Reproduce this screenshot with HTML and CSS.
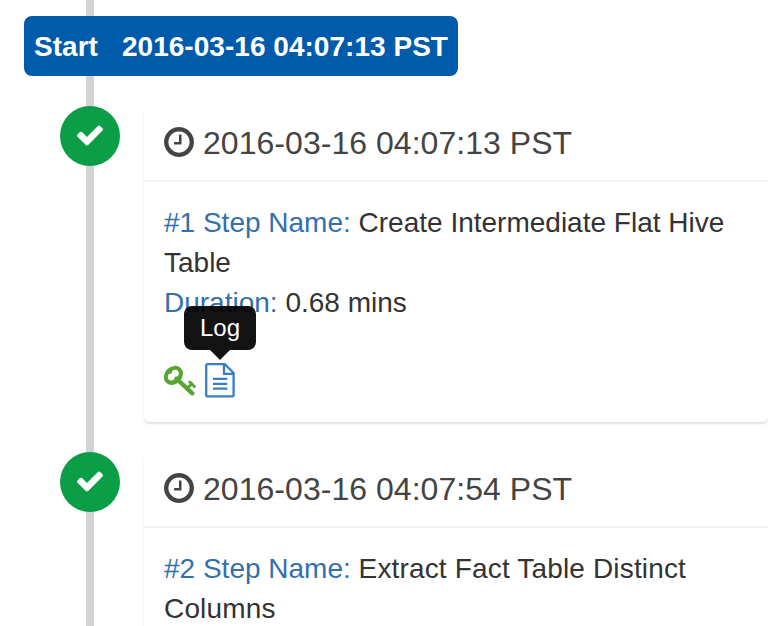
FILE: index.html
```html
<!DOCTYPE html>
<html lang="en">
<head>
<meta charset="utf-8">
<title>Job steps</title>
<link rel="stylesheet" href="styles.css">
</head>
<body>
<svg class="defs" width="0" height="0" aria-hidden="true">
  <symbol id="check" viewBox="0 0 1792 1792"><path d="M1671 566q0 40-28 68l-724 724-136 136q-28 28-68 28t-68-28l-136-136-362-362q-28-28-28-68t28-68l136-136q28-28 68-28t68 28l294 295 656-657q28-28 68-28t68 28l136 136q28 28 28 68z"/></symbol>
  <symbol id="clock" viewBox="128 128 1536 1536"><path d="M1024 544v448q0 14-9 23t-23 9h-320q-14 0-23-9t-9-23v-64q0-14 9-23t23-9h224v-352q0-14 9-23t23-9h64q14 0 23 9t9 23zm416 352q0-148-73-273t-198-198-273-73-273 73-198 198-73 273 73 273 198 198 273 73 273-73 198-198 73-273zm224 0q0 209-103 385.5t-279.5 279.5-385.5 103-385.5-103-279.5-279.5-103-385.5 103-385.5 279.5-279.5 385.5-103 385.5 103 279.5 279.5 103 385.5z"/></symbol>
</svg>
<ul class="timeline">
  <li class="time-label">
    <span class="label"><b>Start</b><b>2016-03-16 04:07:13 PST</b></span>
  </li>
  <li class="step">
    <span class="status"><svg class="check"><use href="#check"/></svg></span>
    <div class="card">
      <h3 class="card-header"><svg class="clock"><use href="#clock"/></svg><span>2016-03-16 04:07:13 PST</span></h3>
      <div class="card-body">
        <div class="name"><span class="key">#1 Step Name:</span> Create Intermediate Flat Hive Table</div>
        <div class="duration"><span class="key">Duration:</span> 0.68 mins</div>
      </div>
      <div class="card-footer">
        <svg class="key-icon" viewBox="0 0 32 31">
          <ellipse class="bow" cx="9.4" cy="10.4" rx="10.3" ry="8.7" transform="rotate(-45 9.4 10.4)"/>
          <circle class="hole" cx="11.3" cy="8.2" r="3.5"/>
          <circle class="hole" cx="7.3" cy="12" r="3.5"/>
          <path class="blade" d="M14.5 15.5L28.3 28.4"/>
          <path class="bit" d="M23 23.2l5-4.4M25.8 17l4.6 4.5"/>
        </svg>
        <span class="log">
          <svg class="file-icon" viewBox="0 0 30 35"><path d="M2.2 1.2h17.6l8.8 8.8v22.3a1 1 0 0 1-1 1H2.2a1 1 0 0 1-1-1V2.2a1 1 0 0 1 1-1zM19 1.5v9.3h9.5M8 15.9h14.2M8 20.8h14.2M8 25.7h14.2"/></svg>
          <span class="tooltip">Log</span>
        </span>
      </div>
    </div>
  </li>
  <li class="step">
    <span class="status"><svg class="check"><use href="#check"/></svg></span>
    <div class="card">
      <h3 class="card-header"><svg class="clock"><use href="#clock"/></svg><span>2016-03-16 04:07:54 PST</span></h3>
      <div class="card-body">
        <div class="name"><span class="key">#2 Step Name:</span> <span class="spaced">Extract Fact Table Distinct Columns</span></div>
      </div>
    </div>
  </li>
</ul>
</body>
</html>
```
FILE: styles.css
```css
* { box-sizing: border-box; }
body {
  margin: 0;
  height: 626px;
  overflow: hidden;
  background: #fff;
  color: #333;
  font: 28px/40px "Liberation Sans", Arial, sans-serif;
}
.defs { position: absolute; }
.timeline {
  list-style: none;
  margin: 0;
  padding: 16px 0 0 24px;
  height: 626px;
  overflow: hidden;
  background: linear-gradient(#d4d4d4, #d4d4d4) 86px 0 / 8px 100% no-repeat;
}
.label {
  display: flex;
  gap: 24px;
  width: 434px;
  height: 60px;
  padding: 11px 10px 9px;
  border-radius: 8px;
  background: #005cab;
  color: #fff;
  letter-spacing: .03px;
  white-space: nowrap;
}
.time-label { margin-bottom: 30px; }
.step {
  display: flex;
  align-items: flex-start;
  gap: 24px;
  padding-left: 36px;
  margin-bottom: 30px;
}
.status {
  flex: none;
  width: 60px;
  height: 60px;
  display: grid;
  place-items: center;
  border-radius: 50%;
  background: #0b9e47;
}
.check { width: 30px; height: 30px; margin-top: -2px; fill: #fff; }
.card {
  flex: 1;
  height: 316px;
  border-radius: 6px;
  background: #fff;
  box-shadow: 0 2px 2px rgba(0, 0, 0, .12);
}
.card-header {
  display: flex;
  align-items: center;
  gap: 9px;
  height: 76px;
  margin: 0;
  padding: 0 20px;
  border-bottom: 2px solid #f1f1f1;
  color: #444;
  font-size: 32px;
  font-weight: 400;
  letter-spacing: .04px;
  line-height: 36px;
  white-space: nowrap;
}
.clock { width: 30px; height: 30px; margin-top: -3px; fill: #444; }
.card-body { padding: 21px 20px 0; }
.key { color: #3470ac; }
.spaced { letter-spacing: .16px; }
.name { width: 570px; }
.card-footer {
  display: flex;
  align-items: flex-start;
  gap: 9px;
  padding: 40px 20px 0;
}
.key-icon { width: 32px; height: 31px; margin-top: 2px; }
.bow { fill: #57a532; }
.hole { fill: #fff; }
.blade, .bit { fill: none; stroke: #57a532; stroke-width: 4.4; stroke-linecap: round; }
.bit { stroke-width: 2.9; }
.log { position: relative; display: flex; }
.file-icon {
  width: 30px;
  height: 35px;
  fill: none;
  stroke: #3a7dc4;
  stroke-width: 2.3;
}
.tooltip {
  position: absolute;
  left: -21px;
  top: -57px;
  width: 72px;
  height: 44px;
  border-radius: 8px;
  background: #000;
  color: #fff;
  font-size: 24px;
  line-height: 44px;
  text-align: center;
  opacity: .92;
}
.tooltip::after {
  content: "";
  position: absolute;
  left: 26px;
  top: 44px;
  border: 10px solid transparent;
  border-top-color: #000;
  border-bottom: 0;
}
```
